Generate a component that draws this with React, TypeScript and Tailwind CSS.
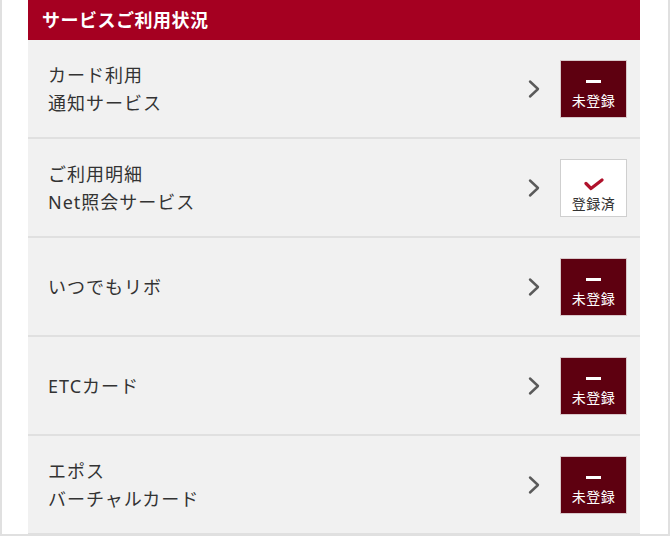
import React from 'react';

type Service = {
  lines: string[];
  registered: boolean;
};

const services: Service[] = [
  { lines: ['カード利用', '通知サービス'], registered: false },
  { lines: ['ご利用明細', 'Net照会サービス'], registered: true },
  { lines: ['いつでもリボ'], registered: false },
  { lines: ['ETCカード'], registered: false },
  { lines: ['エポス', 'バーチャルカード'], registered: false },
];

function Chevron() {
  return (
    <svg width="14" height="20" viewBox="0 0 14 20" fill="none">
      <path d="M3 2.5l8 7.5-8 7.5" stroke="#5a5a5a" strokeWidth="2.4" strokeLinecap="round" strokeLinejoin="round" />
    </svg>
  );
}

function StatusBadge({ registered }: { registered: boolean }) {
  if (registered) {
    return (
      <div className="w-[67px] h-[58px] bg-white border border-[#cfcfcf] flex flex-col items-center pt-[18px]">
        <svg width="22" height="13" viewBox="0 0 22 13" fill="none">
          <path d="M3 5.5l5 5L19 2" stroke="#b0122c" strokeWidth="3.2" strokeLinecap="round" strokeLinejoin="round" />
        </svg>
        <span className="text-[14px] leading-[20px] text-[#333] tracking-[0.5px] mt-[3px]">登録済</span>
      </div>
    );
  }
  return (
    <div className="w-[67px] h-[58px] bg-[#5e0010] border border-[#d8c8ca] flex flex-col items-center pt-[19px]">
      <div className="w-[15px] h-[3px] bg-white" />
      <span className="text-[14px] leading-[20px] text-white tracking-[0.5px] mt-[8px]">未登録</span>
    </div>
  );
}

export default function App() {
  return (
    <div
      className="w-[670px] h-[536px] bg-white border-x-2 border-b-2 border-[#e0e0e0] overflow-hidden"
      style={{ fontFamily: '"Noto Sans", "Noto Sans CJK JP", sans-serif' }}
    >
      <div className="ml-[26px] w-[612px]">
        {/* Header */}
        <div className="h-[40px] bg-[#a50021] flex items-center px-[14px]">
          <h2 className="text-white font-bold text-[18px] leading-none tracking-[0.5px]">サービスご利用状況</h2>
        </div>

        {/* Rows */}
        <div className="bg-[#f1f1f1]">
          {services.map((service, index) => (
            <div
              key={index}
              className="h-[99px] flex items-center pl-[20px] pr-[13px] border-b-2 border-[#e0e0e0]"
            >
              <div className="flex-1 text-[18px] leading-[28px] text-[#333] tracking-[1px]">
                {service.lines.map((line) => (
                  <div key={line}>{line}</div>
                ))}
              </div>
              <div className="mr-[19px]">
                <Chevron />
              </div>
              <StatusBadge registered={service.registered} />
            </div>
          ))}
        </div>
      </div>
    </div>
  );
}
